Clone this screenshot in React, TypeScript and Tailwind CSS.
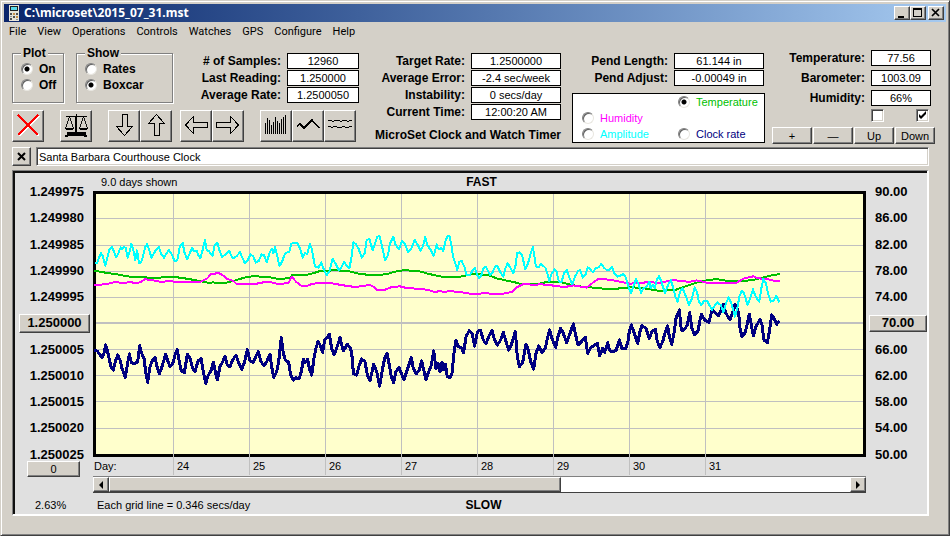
import React from "react";

const raised =
  "bg-[#d4d0c8] border border-t-white border-l-white border-b-[#404040] border-r-[#404040] shadow-[inset_-1px_-1px_0_#808080]";

const radio =
  "appearance-none shrink-0 size-3 rounded-full border border-t-[#808080] border-l-[#808080] border-b-[#e8e6e0] border-r-[#e8e6e0] bg-white shadow-[inset_1px_1px_0_#606060] checked:bg-[radial-gradient(circle,#000_2px,#fff_3px)]";

const menus = [
  "File",
  "View",
  "Operations",
  "Controls",
  "Watches",
  "GPS",
  "Configure",
  "Help",
];

const rateLabels = [
  "1.249975",
  "1.249980",
  "1.249985",
  "1.249990",
  "1.249995",
  "1.250000",
  "1.250005",
  "1.250010",
  "1.250015",
  "1.250020",
  "1.250025",
];

const tempLabels = [
  "90.00",
  "86.00",
  "82.00",
  "78.00",
  "74.00",
  "70.00",
  "66.00",
  "62.00",
  "58.00",
  "54.00",
  "50.00",
];

const days = ["24", "25", "26", "27", "28", "29", "30", "31"];

const chunkOffsets = [-9, 561, 1041, 1521];
const traceTop = 102;

const temperature = [
  "12,137 40,142 80,148 120,155 160,157 205,159 220,156 255,156 290,161 330,168 345,171 355,174 370,172 375,174 405,174 440,165 470,156 498,153 515,156 540,157 560,161",
  "0,161 30,160 36,150 82,149 105,143 120,138 150,137 165,134 180,137 205,138 230,145 260,149 300,150 325,146 345,140 375,135 390,137 415,138 440,145 465,151 490,156 535,156 560,151",
  "105,146 150,152 170,160 200,167 225,172 245,178 290,178 320,171 360,171 395,180 430,186 465,188 490,191 530,191 565,188",
  "90,187 120,188 150,193 180,198 225,195 245,188 265,181 290,173 315,167 350,162 370,166 395,169 430,168 460,165 490,157 515,151 540,147",
];

const humidity = [
  "12,181 50,177 75,171 100,174 120,171 135,174 150,172 165,163 185,165 215,171 235,168 260,171 330,171 352,160 362,148 385,144 395,148 410,161 430,168 440,177 495,177 520,172 545,172 565,177",
  "0,177 25,174 35,155 50,172 65,183 80,183 95,177 115,174 150,174 190,181 225,186 270,180 282,186 290,194 315,194 335,186 360,184 375,188 440,194 465,201 480,198 490,201 510,198 545,202 570,206",
  "120,206 135,203 150,206 190,206 215,201 228,188 250,177 290,180 300,176 320,181 335,181 345,183 375,186 400,181 440,188 460,172 475,162",
  "0,161 40,166 90,176 140,172 180,173 215,166 245,167 265,171 290,166 320,173 410,173 430,161 460,154 475,160 500,162 520,167 540,168",
];

const amplitude = [
  "15,115 22,113 28,95 33,85 38,92 46,122 52,98 58,75 66,66 72,80 79,97 85,85 92,67 97,72 102,66 107,68 113,98 119,80 124,57 130,75 136,105 141,76 147,114 153,113 160,90 166,65 171,58 177,72 184,98 190,88 198,75 207,67 214,88 222,98 230,85 237,75 245,88 254,108 262,106 270,62 278,54 284,85 292,103 297,90 306,69 312,78 320,78 326,92 331,100 338,75 345,45 350,75 356,78 362,85 368,92 374,60 382,53 388,75 396,95 404,90 412,83 418,78 425,95 430,100 440,93 450,82 457,98 465,115 472,107 482,88 490,95 497,113 506,108 515,88 522,90 530,112 540,80 546,72 550,85 555,66 560,85 568,122",
  "2,118 8,105 14,88 22,82 28,80 34,56 42,54 52,55 60,70 68,98 75,85 82,86 89,57 95,70 105,125 115,128 124,112 132,135 140,150 148,140 158,102 166,115 177,136 185,125 192,110 200,122 208,130 214,100 220,52 228,58 236,72 245,98 254,85 260,45 268,42 278,76 285,55 292,35 298,33 305,58 315,106 324,90 330,55 340,35 347,60 357,72 366,48 374,55 385,82 394,70 404,45 412,58 422,78 430,60 436,36 442,60 452,75 461,93 470,58 475,72 484,70 490,78 496,50 502,35 508,32 514,60 519,95 526,115 532,135 538,110 545,108 553,125 560,150 570,150 577,138 584,128 592,150",
  "118,160 125,148 130,130 137,125 145,140 150,150 158,142 165,125 172,122 180,140 190,155 196,130 203,115 212,130 220,145 227,120 231,85 238,82 246,90 256,133 264,115 272,85 279,67 284,100 288,125 296,127 303,117 310,123 316,128 322,145 328,168 335,145 344,133 350,140 356,168 364,172 372,145 380,135 387,155 397,178 405,155 413,140 420,134 428,158 436,150 443,127 450,132 458,142 467,130 475,127 484,117 492,128 500,135 508,135 516,126 523,145 532,155 540,152 550,147 558,158 565,185",
  "93,205 100,185 108,163 115,175 123,203 131,190 140,185 148,170 152,190 158,180 164,190 170,165 177,153 184,170 195,205 204,180 213,165 220,190 226,215 233,230 240,200 248,190 256,210 267,240 276,220 284,187 291,200 296,228 304,240 312,228 322,228 328,240 336,255 345,240 352,232 362,240 370,262 378,235 386,217 394,235 405,275 412,250 418,215 425,198 432,205 443,240 452,215 459,193 467,215 478,230 484,190 490,162 498,175 504,205 512,230 520,228 529,212 538,232",
];

const clockRate = [
  "12,377 22,378 30,390 37,397 42,385 47,360 53,380 58,405 63,425 70,435 76,410 83,390 90,405 96,430 106,457 112,420 118,387 124,412 132,417 143,410 149,362 155,385 162,400 167,440 173,472 180,425 188,405 195,397 201,425 208,447 216,425 227,388 234,410 240,425 250,412 256,385 262,374 268,410 274,438 283,443 292,388 300,400 308,430 315,440 324,408 333,400 340,440 347,475 355,450 362,440 370,412 376,440 382,465 390,425 397,412 405,395 412,420 420,425 428,405 438,390 445,410 455,433 464,410 472,374 480,408 490,412 497,395 505,380 513,410 522,422 530,410 540,388 545,425 551,457 560,440 566,410",
  "4,338 10,385 16,405 26,412 32,450 40,465 48,458 57,462 64,440 70,403 76,412 83,403 88,430 95,450 102,400 108,370 114,350 120,360 128,382 134,345 142,338 148,328 155,370 162,390 170,370 180,338 190,378 202,358 212,370 217,400 220,445 230,450 238,420 245,402 255,410 262,450 270,468 281,418 290,440 299,483 306,440 314,400 321,385 328,420 334,455 341,473 348,440 357,427 364,445 372,465 380,440 388,415 394,398 400,430 408,447 418,435 425,408 430,430 438,465 446,440 454,420 461,378 468,430 474,415 480,440 486,412 490,435 496,418 502,455 510,458 516,445 522,385 528,345 535,365 544,368 551,383 558,335 568,317 576,325 584,363 590,330",
  "115,318 122,317 130,345 138,357 146,335 156,317 164,345 172,360 182,345 190,322 198,350 206,375 214,360 226,320 232,395 238,425 248,412 258,357 265,375 272,410 281,432 288,385 296,363 306,382 316,370 322,340 329,315 336,340 347,367 354,335 362,310 370,325 380,353 390,325 400,297 407,330 414,360 424,350 436,337 443,385 452,368 462,362 472,355 479,392 488,370 494,382 503,353 508,375 516,380 528,377 538,345 546,370 557,372 565,345",
  "87,325 94,300 103,325 113,355 120,320 126,302 138,310 148,340 156,320 166,313 172,350 180,367 188,350 196,320 203,303 208,335 215,358 222,325 228,280 238,255 244,315 252,315 262,300 269,263 276,310 283,330 294,318 300,285 305,268 314,285 327,292 336,255 345,263 356,272 370,238 378,265 390,285 398,262 405,237 410,248 416,265 420,310 426,335 436,322 442,295 448,267 454,300 460,333 468,305 480,283 486,300 492,345 502,353 508,320 515,270 522,280 530,298 538,287",
];

function toPoints(chunks: string[]) {
  return chunks
    .map((chunk, i) =>
      chunk
        .split(" ")
        .map((p) => {
          const [x, y] = p.split(",").map(Number);
          return `${x + chunkOffsets[i]},${y + traceTop}`;
        })
        .join(" ")
    )
    .join(" ");
}

function Trace({
  data,
  color,
  width,
}: {
  data: string[];
  color: string;
  width: number;
}) {
  return (
    <polyline
      points={toPoints(data)}
      fill="none"
      stroke={color}
      strokeWidth={width}
      strokeLinejoin="round"
      vectorEffect="non-scaling-stroke"
    />
  );
}

function Readout({
  id,
  label,
  value,
  box,
}: {
  id: string;
  label: string;
  value: string;
  box: string;
}) {
  return (
    <div className="flex items-center justify-end gap-1.5">
      <label htmlFor={id} className="text-xs leading-4 font-bold">
        {label}
      </label>
      <output
        id={id}
        className={`${box} h-4 border border-black bg-white text-center text-[11px] leading-[15px]`}
      >
        {value}
      </output>
    </div>
  );
}

function Tool({ name, children }: { name: string; children: React.ReactNode }) {
  return (
    <button type="button" aria-label={name} className={`${raised} size-8`}>
      <svg
        viewBox="1 1 30 30"
        className="size-[30px]"
        fill="none"
        stroke="#000"
        shapeRendering="crispEdges"
      >
        {children}
      </svg>
    </button>
  );
}

function Option({
  name,
  label,
  checked,
  color,
}: {
  name: string;
  label: string;
  checked?: boolean;
  color?: string;
}) {
  return (
    <label className={`flex h-4 items-center gap-1.5 ${color ?? ""}`}>
      <input type="radio" name={name} defaultChecked={checked} className={radio} />
      {label}
    </label>
  );
}

function Check({ name, checked }: { name: string; checked?: boolean }) {
  return (
    <span className="relative flex size-[13px]">
      <input
        type="checkbox"
        aria-label={name}
        defaultChecked={checked}
        className="peer size-[13px] appearance-none border border-t-[#808080] border-l-[#808080] border-b-white border-r-white bg-white shadow-[inset_1px_1px_0_#404040,inset_-1px_-1px_0_#d4d0c8]"
      />
      <svg
        viewBox="0 0 13 13"
        className="pointer-events-none absolute inset-0 hidden size-[13px] peer-checked:block"
      >
        <path d="M3 5v3l2 2 5-5V2L5 7z" fill="#000" />
      </svg>
    </span>
  );
}

function TitleBar() {
  return (
    <div className="flex h-[18px] items-center bg-linear-to-r from-[#0a246a] to-[#a6caf0] pr-0.5 pl-[5px] text-white">
      <svg viewBox="0 0 10 16" className="h-4 w-[10px]" shapeRendering="crispEdges">
        <rect width="10" height="16" fill="#e8e4d8" />
        <rect x="1" y="1" width="8" height="5" fill="#202020" />
        <rect x="2" y="2" width="6" height="3" fill="#58d8e8" />
        <path d="M1 8h2v2H1zM7 8h2v2H7zM4 11h2v2H4zM1 13h2v2H1z" fill="#505050" />
        <path d="M4 8h2v2H4zM7 11h2v2H7z" fill="#c89048" />
        <path d="M1 11h2v1H1zM7 14h2v1H7z" fill="#909090" />
      </svg>
      <h1 className="ml-[5px] font-['Noto_Sans',sans-serif] text-xs leading-4 font-bold">
        C:\microset\2015_07_31.mst
      </h1>
      <div className="ml-auto flex">
        <button type="button" aria-label="Minimize" className={`${raised} h-[14px] w-4`}>
          <svg viewBox="0 0 14 12" className="h-3 w-[14px]">
            <path d="M3 9h6v2H3z" />
          </svg>
        </button>
        <button type="button" aria-label="Maximize" className={`${raised} h-[14px] w-4`}>
          <svg viewBox="0 0 14 12" className="h-3 w-[14px]" shapeRendering="crispEdges">
            <path d="M2 1h9v9H2zM3 3v6h7V3z" fillRule="evenodd" />
          </svg>
        </button>
        <button type="button" aria-label="Close" className={`${raised} ml-0.5 h-[14px] w-4`}>
          <svg viewBox="0 0 14 12" className="h-3 w-[14px]">
            <path d="M3 2l7 7M10 2l-7 7" stroke="#000" strokeWidth="1.7" />
          </svg>
        </button>
      </div>
    </div>
  );
}

function Toolbar() {
  return (
    <div className="mt-[7px] flex">
      <Tool name="Stop">
        <path d="M7 6l20 20M27 6L7 26" stroke="#fff" strokeWidth="2" />
        <path d="M6 5l20 20M26 5L6 25" stroke="#f00" strokeWidth="2.500" />
      </Tool>
      <div className="ml-4 flex">
        <Tool name="Balance">
          <path d="M16.500 4v18M6 6.500h21" />
          <path d="M15.500 7v15" />
          <path d="M9.500 7l-4 11M9.500 7l4 11M23.500 7l-4 11M23.500 7l4 11" strokeWidth="0.900" />
          <path d="M5 18h9v1l-2 1H7l-2-1zM19 18h9v1l-2 1h-5l-2-1z" fill="#000" stroke="none" />
          <path d="M7 22h19v3h1v2h-3v-1H8v1H5v-2h2z" fill="#000" stroke="none" />
        </Tool>
      </div>
      <div className="ml-4 flex">
        <Tool name="Move down">
          <path d="M14.500 4.500h5v12h5l-8 9-8-9h6z" />
        </Tool>
        <Tool name="Move up">
          <path d="M14.500 25.500h5v-12h5l-8-9-8 9h6z" />
        </Tool>
      </div>
      <div className="ml-2 flex">
        <Tool name="Move left">
          <path d="M27.500 12.500v5h-14v6l-8-8.500 8-8.500v6z" />
        </Tool>
        <Tool name="Move right">
          <path d="M4.500 12.500v5h14v6l8-8.500-8-8.500v6z" />
        </Tool>
      </div>
      <div className="ml-4 flex">
        <Tool name="Bars">
          <path d="M5.500 24V13M7.500 24V8M9.500 24V10M11.500 24V15M13.500 24V12M15.500 24V7M17.500 24V11M19.500 24V13M21.500 24V9M23.500 24V7M25.500 24V5" />
        </Tool>
        <Tool name="Line">
          <path d="M5 16l3-2 4 4 8-8 7 8" strokeWidth="1.500" />
        </Tool>
        <Tool name="Waves">
          <path d="M4 10.500h4M8 11.500h2M10 10.500h6M16 11.500h2M18 10.500h5M23 11.500h2M25 10.500h3M4 16.500h3M7 17.500h2M9 16.500h4M13 17.500h5M18 16.500h3M21 17.500h4M25 16.500h3" />
        </Tool>
      </div>
    </div>
  );
}

function Header() {
  return (
    <div className="flex pr-[11px] pb-[3px] pl-2">
      <div className="w-[347px]">
        <div className="flex h-[61px] pt-[3px] text-xs font-bold">
          <fieldset className="h-[58px] w-[52px] border border-[#808080] pl-2 shadow-[1px_1px_0_#fff,inset_1px_1px_0_#fff]">
            <legend className="bg-[#d4d0c8] px-0.5 leading-4">Plot</legend>
            <Option name="plot" label="On" checked />
            <Option name="plot" label="Off" />
          </fieldset>
          <fieldset className="ml-3 h-[58px] w-[97px] border border-[#808080] pl-2 shadow-[1px_1px_0_#fff,inset_1px_1px_0_#fff]">
            <legend className="bg-[#d4d0c8] px-0.5 leading-4">Show</legend>
            <Option name="show" label="Rates" />
            <Option name="show" label="Boxcar" checked />
          </fieldset>
          <div className="ml-auto flex flex-col gap-px pt-2 font-normal">
            <Readout id="samples" label="# of Samples:" value="12960" box="w-[72px]" />
            <Readout id="last" label="Last Reading:" value="1.250000" box="w-[72px]" />
            <Readout id="avg" label="Average Rate:" value="1.2500050" box="w-[72px]" />
          </div>
        </div>
        <Toolbar />
      </div>

      <div className="ml-[14px] flex w-[188px] flex-col gap-px pt-[11px]">
        <Readout id="target" label="Target Rate:" value="1.2500000" box="w-[90px]" />
        <Readout id="error" label="Average Error:" value="-2.4 sec/week" box="w-[90px]" />
        <Readout id="instability" label="Instability:" value="0 secs/day" box="w-[90px]" />
        <Readout id="time" label="Current Time:" value="12:00:20 AM" box="w-[90px]" />
        <p className="mt-1.5 text-right text-xs leading-4 font-bold whitespace-nowrap">
          MicroSet Clock and Watch Timer
        </p>
      </div>

      <div className="ml-[11px] w-[193px] pt-[11px]">
        <div className="flex flex-col gap-px pr-px">
          <Readout id="length" label="Pend Length:" value="61.144 in" box="w-[90px]" />
          <Readout id="adjust" label="Pend Adjust:" value="-0.00049 in" box="w-[90px]" />
        </div>
        <div className="mt-[7px] grid h-[50px] grid-cols-[96px_1fr] border border-black bg-white pl-[9px] text-[11px]">
          <span />
          <Option name="trace" label="Temperature" checked color="text-[#00c000]" />
          <Option name="trace" label="Humidity" color="text-[#ff00ff]" />
          <span />
          <Option name="trace" label="Amplitude" color="text-[#00ffff]" />
          <Option name="trace" label="Clock rate" color="text-[#000080]" />
        </div>
      </div>

      <div className="ml-auto pt-2">
        <div className="flex flex-col gap-1 pr-1">
          <Readout id="temp" label="Temperature:" value="77.56" box="w-[60px]" />
          <Readout id="baro" label="Barometer:" value="1003.09" box="w-[60px]" />
          <Readout id="hum" label="Humidity:" value="66%" box="w-[60px]" />
        </div>
        <div className="mt-[3px] ml-auto flex w-16 justify-between pr-1.5">
          <Check name="Left scale" />
          <Check name="Right scale" checked />
        </div>
        <div className="mt-[5px] flex gap-px text-[11px] leading-[14px]">
          <button type="button" className={`${raised} h-[17px] w-10`}>+</button>
          <button type="button" className={`${raised} h-[17px] w-10`}>—</button>
          <button type="button" className={`${raised} h-[17px] w-10`}>Up</button>
          <button type="button" className={`${raised} h-[17px] w-10`}>Down</button>
        </div>
      </div>
    </div>
  );
}

function Plot() {
  return (
    <svg
      viewBox="0 0 2319 798"
      preserveAspectRatio="none"
      className="block h-[266px] w-full"
      shapeRendering="crispEdges"
    >
      <rect width="2319" height="798" fill="#000" />
      <rect x="9" y="9" width="2301" height="780" fill="#ffffcc" />
      <g fill="#c0c0c0">
        {[81, 162, 240, 318, 474, 552, 630, 711].map((y) => (
          <rect key={y} x="9" y={y} width="2301" height="3" />
        ))}
        <rect x="9" y="393" width="2301" height="6" />
        {days.map((d, i) => (
          <rect key={d} x={240 + i * 228} y="9" width="3" height="789" />
        ))}
      </g>
      <Trace data={temperature} color="#00c000" width={2} />
      <Trace data={humidity} color="#ff00ff" width={2} />
      <Trace data={clockRate} color="#000080" width={3} />
      <Trace data={amplitude} color="#00ffff" width={2} />
    </svg>
  );
}

function ChartPanel() {
  return (
    <div className="mt-1 mr-[17px] ml-2 flex h-[346px] border-t border-r-2 border-b-2 border-l border-t-[#808080] border-r-white border-b-white border-l-[#808080] bg-[#e0e0e0] pt-0.5 pl-0.5 text-[11px] shadow-[inset_2px_2px_0_#101010]">
      <div className="flex w-[78px] flex-col">
        <div className="flex h-[295px] flex-col pt-[6px] pr-[9px] text-right text-[13px] leading-[26px] font-bold">
          {rateLabels.map((l, i) =>
            i === 5 ? (
              <div key={l} className="-mr-1.5 ml-1 flex flex-1 items-center">
                <button type="button" className={`${raised} h-[19px] w-full leading-4`}>
                  {l}
                </button>
              </div>
            ) : (
              <span key={l} className="flex-1">
                {l}
              </span>
            )
          )}
        </div>
        <button type="button" className={`${raised} -mt-[7px] ml-3 h-4 w-[53px] leading-[13px]`}>
          0
        </button>
        <span className="mt-5 ml-5 leading-4">2.63%</span>
      </div>

      <div className="min-w-0 flex-1">
        <div className="grid h-[18px] grid-cols-[1fr_auto_1fr] items-center">
          <span className="pl-2">9.0 days shown</span>
          <b className="pl-1 text-xs leading-4">FAST</b>
        </div>
        <Plot />
        <div className="grid h-[19px] grid-cols-[80fr_76fr_76fr_76fr_76fr_76fr_76fr_76fr_161fr] leading-[18px]">
          <span className="pl-px">Day:</span>
          {days.map((d) => (
            <span key={d} className="mb-px border-l border-[#c0c0c0] pl-[3px]">
              {d}
            </span>
          ))}
        </div>
        <div className="flex h-[17px] border-t border-b border-t-[#808080] border-b-[#404040]">
          <button type="button" aria-label="Scroll left" className={`${raised} flex w-4 items-center justify-center`}>
            <svg viewBox="0 0 4 8" className="h-2 w-1">
              <path d="M4 0v8L0 4z" />
            </svg>
          </button>
          <div className="flex-1 bg-white">
            <div className={`${raised} h-full w-[61%]`} />
          </div>
          <button type="button" aria-label="Scroll right" className={`${raised} flex w-4 items-center justify-center`}>
            <svg viewBox="0 0 4 8" className="h-2 w-1">
              <path d="M0 0v8l4-4z" />
            </svg>
          </button>
        </div>
        <div className="mt-1 grid grid-cols-[1fr_auto_1fr] items-center">
          <span className="pl-1">Each grid line = 0.346 secs/day</span>
          <b className="pl-2 text-xs leading-4">SLOW</b>
        </div>
      </div>

      <div className="flex h-[295px] w-[61px] flex-col pt-[6px] pl-[9px] text-[13px] leading-[26px] font-bold">
        {tempLabels.map((l, i) =>
          i === 5 ? (
            <div key={l} className="-ml-1.5 flex flex-1 items-center">
              <button type="button" className={`${raised} h-[17px] w-full leading-[14px]`}>
                {l}
              </button>
            </div>
          ) : (
            <span key={l} className="flex-1">
              {l}
            </span>
          )
        )}
      </div>
    </div>
  );
}

export default function App() {
  return (
    <main className="flex min-h-screen flex-col border border-t-[#d4d0c8] border-r-[#404040] border-b-[#404040] border-l-[#d4d0c8] bg-[#d4d0c8] p-[3px] font-['Liberation_Sans',Arial,sans-serif] text-black shadow-[inset_1px_1px_0_#fff,inset_-1px_-1px_0_#808080]">
      <TitleBar />
      <nav className="flex h-5 items-center gap-[11px] pl-[5px] font-['Roboto',sans-serif] text-[11px] leading-4">
        {menus.map((m) => (
          <button key={m} type="button">
            {m}
          </button>
        ))}
      </nav>
      <Header />
      <div className="flex gap-[5px] pr-[17px] pl-2">
        <button type="button" aria-label="Clear title" className={`${raised} flex size-[19px] items-center justify-center`}>
          <svg viewBox="0 0 9 9" className="size-[9px]">
            <path d="M1 1l7 7M8 1L1 8" stroke="#000" strokeWidth="2" />
          </svg>
        </button>
        <input
          type="text"
          aria-label="Chart title"
          defaultValue="Santa Barbara Courthouse Clock"
          className="h-[19px] min-w-0 flex-1 border border-t-[#808080] border-r-white border-b-white border-l-[#808080] bg-white pl-[2px] text-[11px] leading-4 shadow-[inset_1px_1px_0_#404040,inset_-1px_-1px_0_#d4d0c8]"
        />
      </div>
      <ChartPanel />
    </main>
  );
}
